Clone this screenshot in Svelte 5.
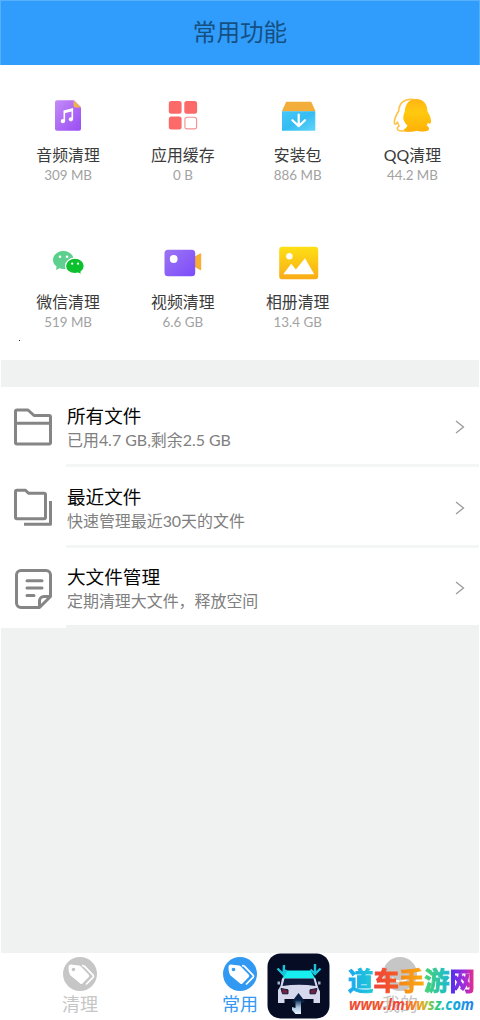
<script>
  const tools = [
    { icon: 'audio', name: '音频清理', size: '309 MB' },
    { icon: 'apps', name: '应用缓存', size: '0 B' },
    { icon: 'package', name: '安装包', size: '886 MB' },
    { icon: 'qq', name: 'QQ清理', size: '44.2 MB' },
    { icon: 'wechat', name: '微信清理', size: '519 MB' },
    { icon: 'video', name: '视频清理', size: '6.6 GB' },
    { icon: 'photo', name: '相册清理', size: '13.4 GB' }
  ];
  const files = [
    { icon: 'folder', name: '所有文件', note: '已用4.7 GB,剩余2.5 GB' },
    { icon: 'recent', name: '最近文件', note: '快速管理最近30天的文件' },
    { icon: 'large', name: '大文件管理', note: '定期清理大文件，释放空间' }
  ];
  const tabs = [
    { name: '清理', active: false, tag: true },
    { name: '常用', active: true, tag: true },
    { name: '我的', active: false, tag: false }
  ];
</script>

<div class="screen">
  <header><h1>常用功能</h1></header>

  <section class="tools">
    {#each tools as t}
      <div class="tool">
        <svg width="44" height="40" viewBox="0 0 44 40">
          {#if t.icon === 'audio'}
            <defs><linearGradient id="ga" x1="0" y1="0" x2="1" y2="1"><stop offset="0" stop-color="#c38bf7" /><stop offset="1" stop-color="#9a4cf3" /></linearGradient></defs>
            <path d="M11 4.300h17l7 7v21.500a2 2 0 0 1-2 2H11a2 2 0 0 1-2-2V6.300a2 2 0 0 1 2-2z" fill="url(#ga)" />
            <path d="M27.500 4.300 35 11.500h-5.500a2 2 0 0 1-2-2z" fill="#f2b24a" />
            <path d="M18.300 25V15l8-2v10M18.300 16.500l8-2" fill="none" stroke="#fff" stroke-width="1.600" />
            <circle cx="16.900" cy="25.200" r="2.100" fill="#fff" /><circle cx="24.900" cy="23.300" r="2.100" fill="#fff" />
          {:else if t.icon === 'apps'}
            <g fill="#fb6a69"><rect x="7.800" y="5" width="12.800" height="12.800" rx="2.500" /><rect x="23.300" y="5" width="12.800" height="12.800" rx="2.500" /><rect x="7.800" y="20.600" width="12.800" height="12.800" rx="2.500" /></g>
            <rect x="23.900" y="21.200" width="11.700" height="11.700" rx="2.200" fill="#fff" stroke="#f68f91" stroke-width="1.100" />
          {:else if t.icon === 'package'}
            <defs><linearGradient id="gp" x1="0" y1="0" x2="1" y2="1"><stop offset="0" stop-color="#46c8f8" /><stop offset=".5" stop-color="#35bdf2" /><stop offset="1" stop-color="#61d5fa" /></linearGradient></defs>
            <g transform="translate(.7 .5)">
              <path d="M9.500 5.200h25l4 8.800v1H5.500v-1z" fill="#f2ad3a" /><path d="M5.300 14.700h33.300v19.600H5.300z" fill="url(#gp)" />
              <path d="M22 18v11.200M15.700 23.700l6.300 5.900 6.300-5.900" fill="none" stroke="#fff" stroke-width="2.200" stroke-linecap="round" stroke-linejoin="round" />
            </g>
          {:else if t.icon === 'qq'}
            <defs><linearGradient id="gq" x1="0" y1="0" x2="0" y2="1"><stop offset="0" stop-color="#ffb414" /><stop offset=".4" stop-color="#ffc90f" /><stop offset="1" stop-color="#ffb006" /></linearGradient></defs>
            <path d="M24 3.500C13.500 2 9 8 8.700 15c-2.500 4-5 9-4.200 12.300.6 1.800 2 .6 3-.9l1.600 3.600c-2.400 1.300-2.500 3.700 0 4.500 3 .8 8 .5 11 0" fill="#fff" stroke="#ffc247" stroke-width="1.600" />
            <path d="M26 3c8 0 11.500 6 11.500 12.600 2.800 4.100 4 8.600 3.500 11-.5 1.700-1.800 1.200-3-.2-.3 1.400-.8 2.400-1.500 3.200 3 1.400 3.300 4.200 1.200 5.200-3 1-8.500.9-11.200-.1-3.500 1.400-9 1.400-12 .3l-.6-1.800c1.800-.8 3.300-2.200 3.500-4-2.200-1.200-2.700-3.700-3.700-5-1-2.500-.2-5.500 1.100-9C15.300 8.500 18.700 3 26 3z" fill="url(#gq)" />
            <path d="M9 26.500q1 3.500 4.400 1l2.600 1.300c-.6 2.200-2.700 4-5.500 3.500z" fill="#fff" />
          {:else if t.icon === 'wechat'}
            <defs><linearGradient id="gw" x1="0" y1="0" x2="1" y2="1"><stop offset="0" stop-color="#50d384" /><stop offset="1" stop-color="#6fc99d" /></linearGradient></defs>
            <path d="M17.300 8c6 0 10.400 3.900 10.400 8.900S23 26 17.300 26q-2 0-3.700-.7L10 27l.6-3.400C8.500 22 7 19.500 7 16.900 7 12 11.600 8 17.300 8z" fill="url(#gw)" />
            <path d="M29 15.200c5.200 0 9.300 3.500 9.300 7.800 0 2.500-1.400 4.500-3.300 6l.6 2.900-3.500-1.700q-1.500.4-3.100.4c-5.200 0-9.500-3.300-9.500-7.600s4.300-7.800 9.500-7.800z" fill="#0dc02e" stroke="#fff" stroke-width="1.200" />
            <g fill="#fff"><circle cx="14" cy="13.700" r="1.300" /><circle cx="21" cy="13.700" r="1.300" /><circle cx="26.200" cy="20.700" r="1.100" /><circle cx="32" cy="20.700" r="1.100" /></g>
          {:else if t.icon === 'video'}
            <defs><linearGradient id="gv" x1="0" y1="0" x2="1" y2="1"><stop offset="0" stop-color="#9c75f3" /><stop offset="1" stop-color="#7c4cfa" /></linearGradient></defs>
            <path d="m32 14.500 7-4q1.200-.5 1.200.8v15q0 1.200-1.200.7l-7-4z" fill="#f7ae35" />
            <rect x="3.500" y="6.700" width="30.700" height="26.500" rx="3.500" fill="url(#gv)" /><circle cx="12.700" cy="16" r="3.900" fill="#fff" />
          {:else}
            <defs><linearGradient id="gi" x1="0" y1="0" x2="0" y2="1"><stop offset="0" stop-color="#fee015" /><stop offset="1" stop-color="#f9ab17" /></linearGradient></defs>
            <g transform="translate(.7 0)">
              <rect x="2.500" y="3.700" width="39" height="32.500" rx="3" fill="url(#gi)" /><circle cx="12.700" cy="13.300" r="3.200" fill="#fff" />
              <path d="m6.500 31.300 8-10.500 4.700 5.700 9.100-11.200 9.200 16z" fill="#fff" />
            </g>
          {/if}
        </svg>
        <span class="name">{t.name}</span>
        <span class="size">{t.size}</span>
      </div>
    {/each}
    <i class="dot"></i>
  </section>

  <section class="files">
    {#each files as f}
      <div class="file">
        <svg class="ficon" width="66" height="48" viewBox="0 0 66 48" fill="none" stroke="#858585" stroke-width="3" stroke-linejoin="round">
          {#if f.icon === 'folder'}
            <path d="M17 8h11l6 5.500h15a1.500 1.500 0 0 1 1.500 1.500v25.500a1.500 1.500 0 0 1-1.500 1.500H17a1.500 1.500 0 0 1-1.500-1.500V9.500A1.500 1.500 0 0 1 17 8zM15.500 21.300h35" />
          {:else if f.icon === 'recent'}
            <path d="M17 8.300h8.500l3 3H44a1.500 1.500 0 0 1 1.500 1.500v22.500a1.500 1.500 0 0 1-1.500 1.500H17a1.500 1.500 0 0 1-1.500-1.500V9.800A1.500 1.500 0 0 1 17 8.300zM24 42.200h26.500V19" />
          {:else}
            <path d="M21 7.500h25a4.500 4.500 0 0 1 4.500 4.500v21.500L39.500 44.500H21a4.500 4.500 0 0 1-4.500-4.500V12A4.500 4.500 0 0 1 21 7.500zM39.500 44V38a4.500 4.500 0 0 1 4.500-4.500h6M27 17.700h15M27 25h15M27 32.500h7" stroke-linecap="round" />
          {/if}
        </svg>
        <div class="body">
          <div class="txt"><span class="title">{f.name}</span><span class="note">{f.note}</span></div>
          <svg width="12" height="16" viewBox="0 0 12 16" fill="none" stroke="#9b9b9b" stroke-width="1.300"><path d="m2 2 7.500 6L2 14" /></svg>
        </div>
      </div>
    {/each}
  </section>

  <div class="space"></div>

  <nav>
    {#each tabs as tab}
      <div class="tab" class:active={tab.active}>
        <svg width="36" height="36" viewBox="0 0 36 36">
          <circle cx="18" cy="18" r="17" fill="currentColor" />
          {#if tab.tag}
            <path d="m20 9.500 2.500.8 8.700 9q.7 1 0 1.800L24 28.500" fill="none" stroke="#fff" stroke-width="1.700" />
            <path d="M8.500 8.500 17 9.500q1 .2 1.800 1l8 8.300q1 1.200 0 2.300l-6.300 6.400q-1.200 1-2.300 0L8.500 19.500Q6.500 17 6.500 11q0-2.500 2-2.500z" fill="#fff" />
            <circle cx="11.500" cy="13.500" r="1.800" fill="currentColor" />
          {:else}
            <path d="M10 22q8 7 16 0" fill="none" stroke="#fff" stroke-width="2" />
          {/if}
        </svg>
        <span>{tab.name}</span>
      </div>
    {/each}
  </nav>

  <div class="mark">
    <svg width="63" height="66" viewBox="0 0 63 66">
      <defs><linearGradient id="gm" x1="0" y1="0" x2="0" y2="1"><stop offset="0" stop-color="#17385a" /><stop offset=".5" stop-color="#a9c4de" /><stop offset="1" stop-color="#e7f6ff" /></linearGradient></defs>
      <rect x="0.500" y="0.500" width="62" height="65" rx="13" fill="#050c24" />
      <path d="m20 17.500h23.500l5 8.500H15z" fill="#16eef0" />
      <path d="M15 25.500h33.500l3 10 1.500 3V50h-6.500v-4H17.500v4H11V37l2.500-4z" fill="#d6d9ee" />
      <path d="M17.500 25.500h29l2 7.500q-16.500-2.500-33 0z" fill="#101b3b" />
      <path d="m14 35.500 7 1.300v4h-5.500zM50 35.500l-7 1.300v4h5.500z" fill="#75213d" stroke="#101b3b" />
      <path d="M10.500 28.500h2.500v3h-2.500zM51 28.500h2.500v3H51z" fill="#a8b2d0" />
      <path d="m31.500 40 6.500 8.500-3.500 2H28l-3-2z" fill="#0b1f42" />
      <path d="M28.500 47.500H34V61h-5.500l-3.500-4v-3l3.500 1z" fill="url(#gm)" />
      <path d="m17 12-.5 9.500M10.500 15.500l6 6 3-4.500M48 11v10M43.500 16.500l4.500 4.500 5.500-5.500" fill="none" stroke="#18c5dc" stroke-width="2.400" />
    </svg>
    <div class="brand">
      <div class="cn"><b class="c1">道</b><b class="c2">车</b><b class="c3">手</b><b class="c4">游</b><b class="c5">网</b></div>
      <svg class="url" width="130" height="22" viewBox="0 0 130 22">
        <defs><linearGradient id="gu" gradientUnits="userSpaceOnUse" x1="1" y1="0" x2="127" y2="0"><stop offset="0" stop-color="#ed4937" /><stop offset=".25" stop-color="#f2552a" /><stop offset=".4" stop-color="#f0433c" /><stop offset=".56" stop-color="#f59b16" /><stop offset=".62" stop-color="#a9c33a" /><stop offset=".7" stop-color="#30cb80" /><stop offset=".8" stop-color="#12b4d9" /><stop offset="1" stop-color="#2679ed" /></linearGradient></defs>
        <text x="1" y="14" textLength="125" lengthAdjust="spacingAndGlyphs" fill="url(#gu)">www.lmwwsz.com</text>
      </svg>
    </div>
  </div>
</div>

<style>
  :global(body) { margin: 0; background: #fff; }
  .screen { box-sizing: border-box; width: 480px; height: 1020px; padding: 0 1px; display: flex; flex-direction: column; position: relative; overflow: hidden; background: #fff; font-family: Lato, "Noto Sans CJK SC", sans-serif; }
  header { height: 65px; margin: 0 -1px; box-sizing: border-box; background: #309dfc; border: 1px solid #55b1fb; border-bottom: 0; display: flex; justify-content: center; align-items: center; }
  h1 { margin: 0 0 2px; font-size: 23.600px; line-height: 30px; font-weight: 400; color: #164f82; }
  .tools { position: relative; box-sizing: border-box; height: 295px; padding: 31px 9.700px 0; display: grid; grid-template-columns: repeat(4, 114.800px); grid-auto-rows: 147px; }
  .tool { display: flex; flex-direction: column; align-items: center; }
  .name { margin-top: 7px; font-size: 15.900px; line-height: 24px; color: #3b3b3b; }
  .size { font-size: 13.400px; line-height: 16px; color: #a2a2a2; }
  .dot { position: absolute; left: 18px; top: 275px; width: 1px; height: 1px; background: #222; }
  .files { height: 268px; border-top: 27px solid #f0f2f2; background: #f0f2f2; flex: none; box-sizing: border-box; }
  .file { height: 80.400px; display: flex; background: #fff; }
  .ficon { margin: 15px 0 0 -1px; flex: none; }
  .body { flex: 1; box-sizing: border-box; border-bottom: 3px solid #f4f5f5; display: flex; justify-content: space-between; align-items: center; padding: 3px 13px 0 1px; }
  .file:last-child .body { border-bottom-color: #f0f2f2; }
  .txt { display: flex; flex-direction: column; }
  .title { font-size: 18.600px; line-height: 26px; color: #050505; }
  .note { font-size: 15.950px; line-height: 22px; color: #808080; white-space: nowrap; }
  .space { flex: 1; background: #f0f2f2; }
  nav { height: 67px; flex: none; display: flex; background: #fff; margin: 0 -1px; }
  .tab { width: 160px; display: flex; flex-direction: column; align-items: center; color: #c6c6c6; padding-top: 3px; box-sizing: border-box; }
  .tab span { font-size: 18px; line-height: 24px; }
  .tab.active { color: #3299f2; }
  .mark { position: absolute; left: 267px; top: 953px; display: flex; gap: 18px; }
  .brand { padding-top: 11px; }
  .cn { display: flex; font-size: 25.400px; line-height: 32px; height: 32px; }
  .cn b { background-clip: text; color: transparent; font-weight: 700; -webkit-text-stroke: 1px transparent; }
  .c1 { background-image: linear-gradient(90deg, #19a7f1, #20c8d6); }
  .c2 { background-image: linear-gradient(90deg, #f0433c, #f45c22); }
  .c3 { background-image: linear-gradient(90deg, #f58617, #fbab12); }
  .c4 { background-image: linear-gradient(90deg, #48d46d, #19b8d6); }
  .c5 { background-image: linear-gradient(90deg, #4930ee, #a62bd8 60%, #ee307a); }
  .url { display: block; overflow: visible; font: italic 700 16.500px "Open Sans", sans-serif; }
</style>
